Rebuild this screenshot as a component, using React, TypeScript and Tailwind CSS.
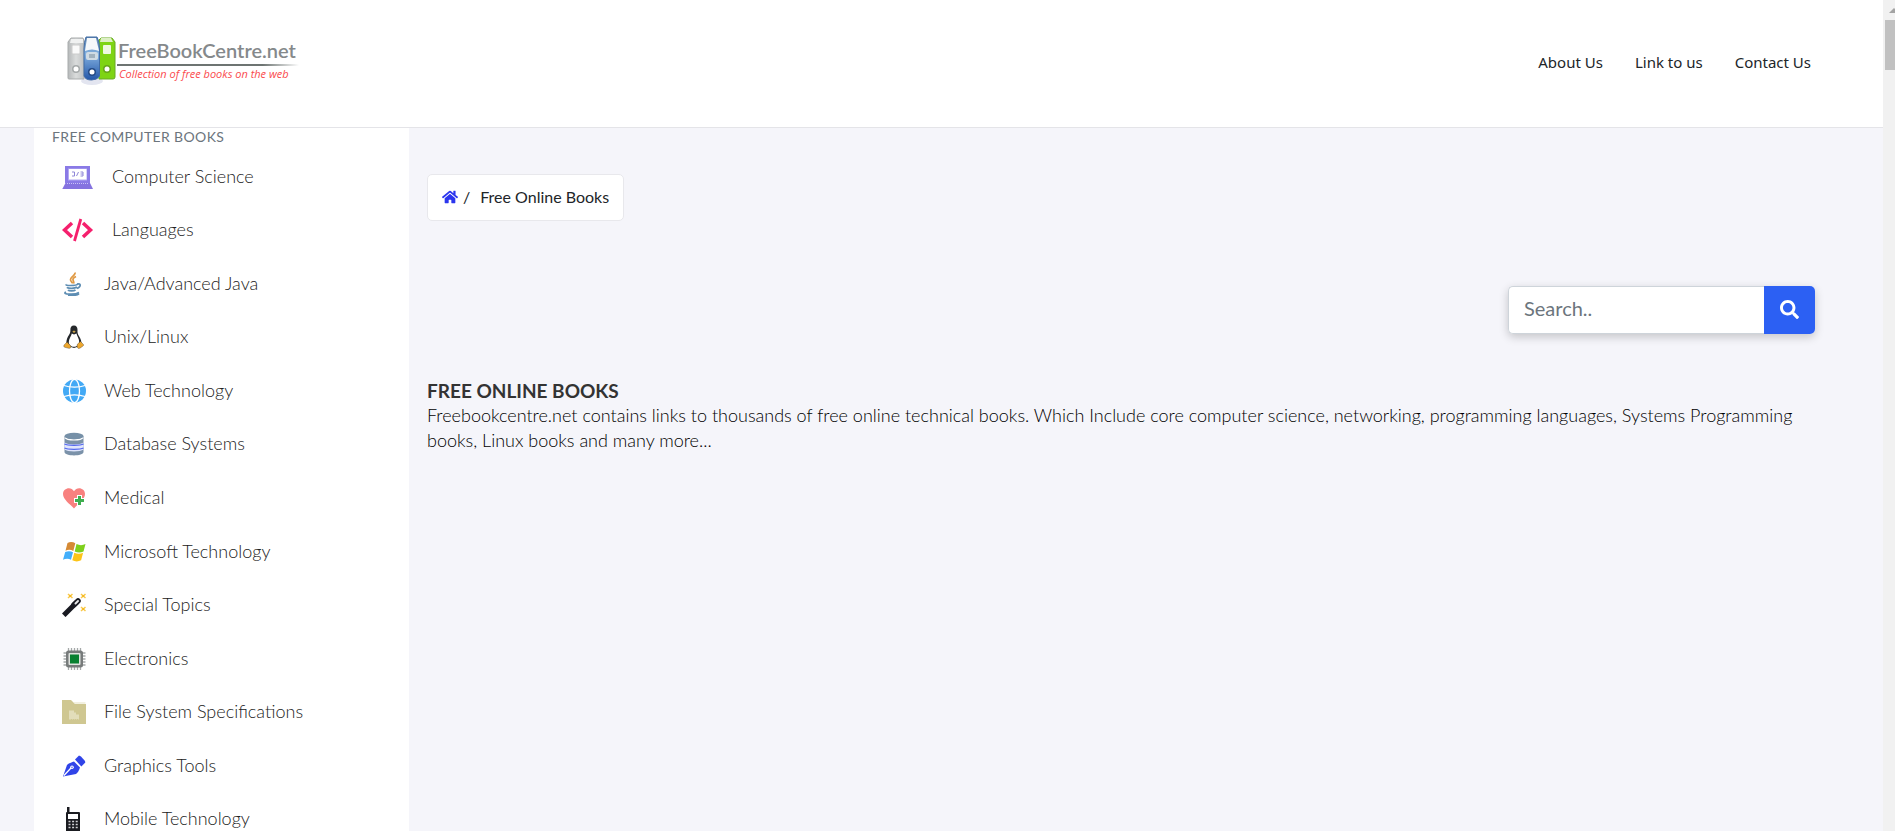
import type { ReactNode } from 'react';
import { FaHome, FaSearch } from 'react-icons/fa';

function LaptopIcon() {
  return (
    <svg viewBox="0 0 32 24" className="h-6 w-8">
      <path d="M3 1h25v17H3z" fill="#8a7ae6" />
      <path d="M6 3.500h19v12H6z" fill="#b3a9f3" />
      <path d="M7 4h17.500v10.500H7z" fill="#fff" />
      <path d="M10 7h2.500v4H10M14.500 11l2-4M18.500 7h2.500v4h-2.500M18.500 9H21" fill="none" stroke="#8f86d8" strokeWidth="1" />
      <path d="M3.500 18h24.500l3 6H.300z" fill="#8573e0" />
      <path d="M5 18.500h21" stroke="#c9c2f7" strokeWidth="1" strokeDasharray="1 1" />
    </svg>
  );
}

function CodeIcon() {
  return (
    <svg viewBox="0 0 32 24" className="h-6 w-8" fill="none" stroke="#f5206d" strokeWidth="3.500">
      <path d="M10 5L2.500 12 10 19" />
      <path d="M21 5l7.500 7L21 19" />
      <path d="M18.800 1L12.500 23" strokeWidth="2.800" />
    </svg>
  );
}

function JavaIcon() {
  return (
    <svg viewBox="0 0 24 24" className="size-6" fill="none">
      <path d="M13 .500c1 2.500-5 4.500-4.500 7.500.200 1.500 2 2.200 2 3.500M14 4.500c-2 1-3.500 2-3 3.500s1.500 2 .500 3.500" stroke="#e09a45" strokeWidth="1.700" />
      <path d="M4.500 12.300c-3 1.500 10 1.800 11.500-.300" stroke="#5d8db3" strokeWidth="1.500" />
      <path d="M5 15.200c1 1.500 8 1.500 10-.200M6 17.900c1 1.300 6 1.300 7.500 0M15 12c4.500-1 4 3 0 4.500" stroke="#5d8db3" strokeWidth="1.700" />
      <path d="M4 20c-5 2.200 9 3.200 13 .500M6 23.200c4 .500 9 0 11-1.500" stroke="#5d8db3" strokeWidth="1.700" />
    </svg>
  );
}

function LinuxIcon() {
  return (
    <svg viewBox="0 0 24 24" className="size-6">
      <path d="M12 .500c-2.600 0-3.800 2-3.600 4.500.200 3-1 4-2.400 6.600C4.600 14.300 4 17 4.500 20.500L12 23l7.500-2.500c.300-4-.800-7-2.600-9.500-1.300-2-1.500-3.500-1.400-6C15.500 2 14.300.500 12 .500z" fill="#25282b" />
      <path d="M9.800 8.500L12 9.500l2.500-1c.500 2.500 2.700 5 2.700 8.500 0 3-2.500 4.800-5.200 4.800-3 0-5.200-1.800-5.200-4.800 0-3 2.500-6 3-8.500z" fill="#fff" />
      <path d="M10.300 6.500l1.700-1 1.700 1L12 8z" fill="#c9a24a" />
      <path d="M5 17l3.800 4c.500 1.500-.500 2.500-2 2.300l-4-1c-1.300-.500-1.300-1.300-.500-2.500zM18.500 16.500l-3 2.500c-.700 2-.500 4 1 4.500 1.500 0 3-1.500 4.500-2.500 1-.700.700-1.500 0-2z" fill="#eda72e" stroke="#4a4030" strokeWidth=".4" />
    </svg>
  );
}

function GlobeIcon() {
  return (
    <svg viewBox="0 0 24 24" className="size-6">
      <circle cx="12.500" cy="12" r="11.500" fill="#42a9f5" />
      <g fill="none" stroke="#fff" strokeWidth="1.300">
        <ellipse cx="12.500" cy="12" rx="5" ry="11.700" />
        <path d="M2 6.500c6 2.200 15 2.200 21 0M2 17.500c6-2.200 15-2.200 21 0" />
      </g>
    </svg>
  );
}

function DatabaseIcon() {
  return (
    <svg viewBox="0 0 24 24" className="size-6">
      <path d="M2.500 4v16c0 4.500 19 4.500 19 0V4z" fill="#7b92a9" />
      <path d="M2.500 10.500c3 2.500 16 2.500 19 0v7c-3 2.500-16 2.500-19 0z" fill="#dfe5fc" />
      <path d="M2.500 12c3 1.700 16 1.700 19 0M2.500 16c3 1.700 16 1.700 19 0" stroke="#5266ef" strokeWidth="1.200" fill="none" />
      <path d="M3 5.700c2 3 16 3 18 0" stroke="#fff" strokeWidth="1.300" fill="none" />
      <ellipse cx="12" cy="4" rx="9.500" ry="3.300" fill="#7690a7" />
    </svg>
  );
}

function HeartIcon() {
  return (
    <svg viewBox="0 0 24 24" className="size-6">
      <path d="M12 22.500C8 18 1 13.500 1 8c0-6 8-8 11-2.800C15 0 23 2 23 8c0 5.500-7 10-11 14.500z" fill="#f8817f" />
      <path d="M15 9h5v3h3v5h-3v3h-5v-3h-3v-5h3z" fill="#fff" />
      <path d="M16 10h3v3h3v3h-3v3h-3v-3h-3v-3h3z" fill="#3fae50" />
    </svg>
  );
}

function WindowsIcon() {
  return (
    <svg viewBox="0 0 24 24" className="size-6">
      <path d="M5.500 3C8 1.500 11 1.800 13.300 3.200L11.300 11C9 9.600 6 9.500 3.500 10.700z" fill="#d58a35" />
      <path d="M14.500 4c3 1.500 6 1.500 9 0l-2 7.500c-3 1.500-6 1.300-8.800 0z" fill="#7ed01c" />
      <path d="M3.200 12C6 10.800 8.800 11 11 12.300L9 19.800C6.800 18.500 3.500 18.500 1 19.800z" fill="#42aefa" />
      <path d="M12.300 12.800c3 1.400 6 1.400 8.800 0l-2 7.500c-2.800 1.500-6 1.500-8.800 0z" fill="#fcc417" />
    </svg>
  );
}

function WandIcon() {
  return (
    <svg viewBox="0 0 24 24" className="size-6">
      <path d="M3.500 20.500L13 11" stroke="#191a22" strokeWidth="5" strokeLinecap="square" />
      <path d="M12 11.800L16 8" stroke="#191a22" strokeWidth="5.500" strokeLinecap="round" />
      <path d="M13.500 10.500l2.500-2.500" stroke="#e8e8ea" strokeWidth="2" strokeLinecap="round" />
      <path d="M6 1l4.500 4M10.500 1L6 5M19 1l4.500 4M23.500 1L19 5M19 14l4.500 4M23.500 14L19 18" stroke="#f9c94a" strokeWidth="1.500" />
      <path d="M7.200 2h2v2h-2zM20.200 2h2v2h-2zM20.200 15h2v2h-2z" fill="#f5b921" />
    </svg>
  );
}

function ChipIcon() {
  return (
    <svg viewBox="0 0 24 24" className="size-6">
      <path d="M6.500 1v22M9.500 1v22M12.500 1v22M15.500 1v22M18.500 1v22M1.500 6h22M1.500 9h22M1.500 12h22M1.500 15h22M1.500 18h22" stroke="#a5a9a9" strokeWidth="1.300" />
      <rect x="4" y="3.500" width="17" height="17" rx="2.500" fill="#777b7b" />
      <rect x="6.500" y="6" width="12" height="12" rx="1" fill="#dfe3df" />
      <rect x="8" y="7.500" width="9" height="9" fill="#078030" />
    </svg>
  );
}

function FolderIcon() {
  return (
    <svg viewBox="0 0 24 24" className="size-6">
      <path d="M0 0h9l4 4h11v20H0z" fill="#cfc791" />
      <path d="M11.500 2.500h12v1h-11z" fill="#e6e1c2" />
      <path d="M7 10.500h5v2h2v2h3v5H7z" fill="#e2ddba" />
      <path d="M9 19.500h7" stroke="#cfc791" strokeDasharray="1 1" />
    </svg>
  );
}

function PenIcon() {
  return (
    <svg viewBox="0 0 24 24" className="size-6">
      <path d="M1 22.500L5 11c1.500-1.500 4-2.500 7-3.500l6 6c-1 3-2 5-4 6.500z" fill="#3044e8" />
      <path d="M13 5.500L17 1.500l2 1 4 4.500.300 1.500-4 4z" fill="#3044e8" />
      <path d="M2 21.500l7-7.500" stroke="#fff" strokeWidth="1.300" />
      <circle cx="10" cy="13.300" r="1.800" fill="#fff" />
      <circle cx="10" cy="13.300" r=".700" fill="#3044e8" />
    </svg>
  );
}

function PhoneIcon() {
  return (
    <svg viewBox="0 0 24 24" className="size-6">
      <path d="M5 0h2.500v5H17q1 0 1 1v18H4V6q0-1 1-1z" fill="#1a1b20" />
      <path d="M6 7h10v5H6z" fill="#fff" />
      <path d="M6.500 14.500h9.500M6.500 17.500h9.500M6.500 20.500h9.500" stroke="#d0d0d4" strokeWidth="1.500" strokeDasharray="2 1.600" />
    </svg>
  );
}

function BindersIcon() {
  return (
    <svg viewBox="0 0 50 50" className="h-[50px] w-[50px] shrink-0">
      <defs>
        <linearGradient id="grey" x1="0" x2="1">
          <stop offset="0" stopColor="#b5b8b9" />
          <stop offset=".5" stopColor="#dadcdc" />
          <stop offset="1" stopColor="#bfc2c3" />
        </linearGradient>
        <linearGradient id="blue" x1="0" x2="0" y1="0" y2="1">
          <stop offset="0" stopColor="#5e83ad" />
          <stop offset=".4" stopColor="#82b0e0" />
          <stop offset="1" stopColor="#2356a8" />
        </linearGradient>
      </defs>
      <ellipse cx="25" cy="45" rx="11" ry="4" fill="#e3e5f0" />
      <path d="M4 2h12l1 3v38H2q-1 0-1-1V6z" fill="url(#grey)" stroke="#a9acad" />
      <path d="M4 3h12v4H3z" fill="#f0f1f1" />
      <rect x="5" y="9" width="8" height="9" rx="1" fill="#fafafa" stroke="#ccc" />
      <path d="M34 2h11l3 4v35q0 2-2 2H32V4z" fill="#7ed414" stroke="#69aa25" />
      <path d="M34 2h10l2 4H33z" fill="#dcefc4" />
      <rect x="36" y="9" width="8" height="9" rx="1" fill="#eef8df" />
      <path d="M19 1h11q2.500 4 2.500 12v27q-2 4-8 4t-7.500-4V13q0-7 2-12z" fill="url(#blue)" stroke="#416ca5" />
      <path d="M20 2h9l3 13q-7-3-14 0z" fill="#f5f8fb" />
      <rect x="19" y="16" width="12" height="8" rx="2" fill="#d0dbe4" />
      <rect x="22" y="18" width="6" height="4" fill="#a2b2be" />
      <circle cx="9" cy="33" r="4" fill="#a5a9aa" />
      <circle cx="9" cy="33" r="2.500" fill="#fff" />
      <circle cx="25" cy="36" r="4" fill="#244b86" />
      <circle cx="25" cy="36" r="2.500" fill="#fff" />
      <circle cx="40" cy="33" r="4" fill="#66a51b" />
      <circle cx="40" cy="33" r="2.500" fill="#fff" />
    </svg>
  );
}

const topics: { label: string; icon: ReactNode }[] = [
  { label: 'Computer Science', icon: <LaptopIcon /> },
  { label: 'Languages', icon: <CodeIcon /> },
  { label: 'Java/Advanced Java', icon: <JavaIcon /> },
  { label: 'Unix/Linux', icon: <LinuxIcon /> },
  { label: 'Web Technology', icon: <GlobeIcon /> },
  { label: 'Database Systems', icon: <DatabaseIcon /> },
  { label: 'Medical', icon: <HeartIcon /> },
  { label: 'Microsoft Technology', icon: <WindowsIcon /> },
  { label: 'Special Topics', icon: <WandIcon /> },
  { label: 'Electronics', icon: <ChipIcon /> },
  { label: 'File System Specifications', icon: <FolderIcon /> },
  { label: 'Graphics Tools', icon: <PenIcon /> },
  { label: 'Mobile Technology', icon: <PhoneIcon /> },
];

function Header() {
  return (
    <header className="flex h-32 items-start justify-between border-b border-[#e4e4e8] bg-white pr-[72px] pl-[67px]">
      <a href="#" className="mt-9 flex items-start">
        <BindersIcon />
        <span className="flex flex-col">
          <span className="pl-px font-['Lato',sans-serif] text-[20px] leading-7 font-semibold text-[#85898b]">FreeBookCentre.net</span>
          <span className="h-0.5 w-[182px] bg-linear-to-r from-[#6d7472] from-80% to-transparent" />
          <span className="pl-0.5 font-['Open_Sans',sans-serif] text-[11px] leading-4 font-medium text-[#fa4a4d] italic">
            Collection of free books on the web
          </span>
        </span>
      </a>
      <nav className="mt-[50px] flex gap-8 font-['Noto_Sans',sans-serif] text-[15px] leading-6 text-[#212529]">
        <a href="#">About Us</a>
        <a href="#">Link to us</a>
        <a href="#">Contact Us</a>
      </nav>
    </header>
  );
}

function Sidebar() {
  return (
    <aside className="w-[375px] shrink-0 bg-white">
      <h2 className="mb-1 px-[18px] text-[14px] leading-[18px] tracking-wide text-[#6c757d] uppercase">Free Computer Books</h2>
      <ul className="grid h-[696px] auto-rows-fr pl-7">
        {topics.map((topic) => (
          <li key={topic.label} className="flex items-center">
            <a href="#" className="flex items-center gap-[18px] text-[18px] leading-7 font-light text-[#222]">
              {topic.icon}
              <span className="pb-0.5">{topic.label}</span>
            </a>
          </li>
        ))}
      </ul>
    </aside>
  );
}

function Scrollbar() {
  return (
    <div className="flex w-3 shrink-0 flex-col items-end overflow-hidden bg-[#f1f1f1]" aria-hidden="true">
      <svg viewBox="0 0 6 20" className="h-5 w-1.5">
        <path d="M0 13l5-5 1 1v4z" fill="#a3a3a3" />
      </svg>
      <div className="h-[50px] w-2.5 bg-[#c1c1c1]" />
    </div>
  );
}

export default function App() {
  return (
    <div className="flex h-screen overflow-hidden bg-[#f5f5fa] font-['Lato',sans-serif] text-[#333]">
      <div className="min-w-0 flex-1">
        <Header />
        <div className="flex pl-[34px]">
          <Sidebar />
          <main className="min-w-0 flex-1 pt-[46px] pr-[68px] pl-[18px]">
            <nav
              aria-label="Breadcrumb"
              className="flex h-[47px] w-fit items-center rounded-[5px] border border-[#e8e8ec] bg-white px-3.5 pb-0.5 text-[16px] leading-6 text-[#212529]"
            >
              <a href="#" aria-label="Home" className="text-[#2b35ee]">
                <FaHome className="size-4" />
              </a>
              <span className="pr-2.5 pl-[5px]">/</span>
              <span>Free Online Books</span>
            </nav>
            <form className="mt-[65px] ml-auto flex h-12 w-[307px] rounded-[5px] shadow-[0_3px_10px_rgba(0,0,0,0.2)]" onSubmit={(e) => e.preventDefault()}>
              <input
                type="text"
                aria-label="Search"
                placeholder="Search.."
                className="min-w-0 flex-1 rounded-l-[5px] border border-r-0 border-[#ced4da] bg-white px-[15px] pb-1 text-[20px] outline-none placeholder:text-[#6c757d]"
              />
              <button type="submit" aria-label="Search" className="flex w-[51px] items-center justify-center rounded-r-[5px] bg-[#2c60f3] pb-0.5 text-white">
                <FaSearch className="size-[19px]" />
              </button>
            </form>
            <h1 className="mt-11 text-[19px] leading-[25px] font-bold uppercase">Free Online Books</h1>
            <p className="text-[18px] leading-[25px] font-light text-black">
              Freebookcentre.net contains links to thousands of free online technical books. Which Include core computer science, networking,
              programming languages, Systems Programming books, Linux books and many more...
            </p>
          </main>
        </div>
      </div>
      <Scrollbar />
    </div>
  );
}
